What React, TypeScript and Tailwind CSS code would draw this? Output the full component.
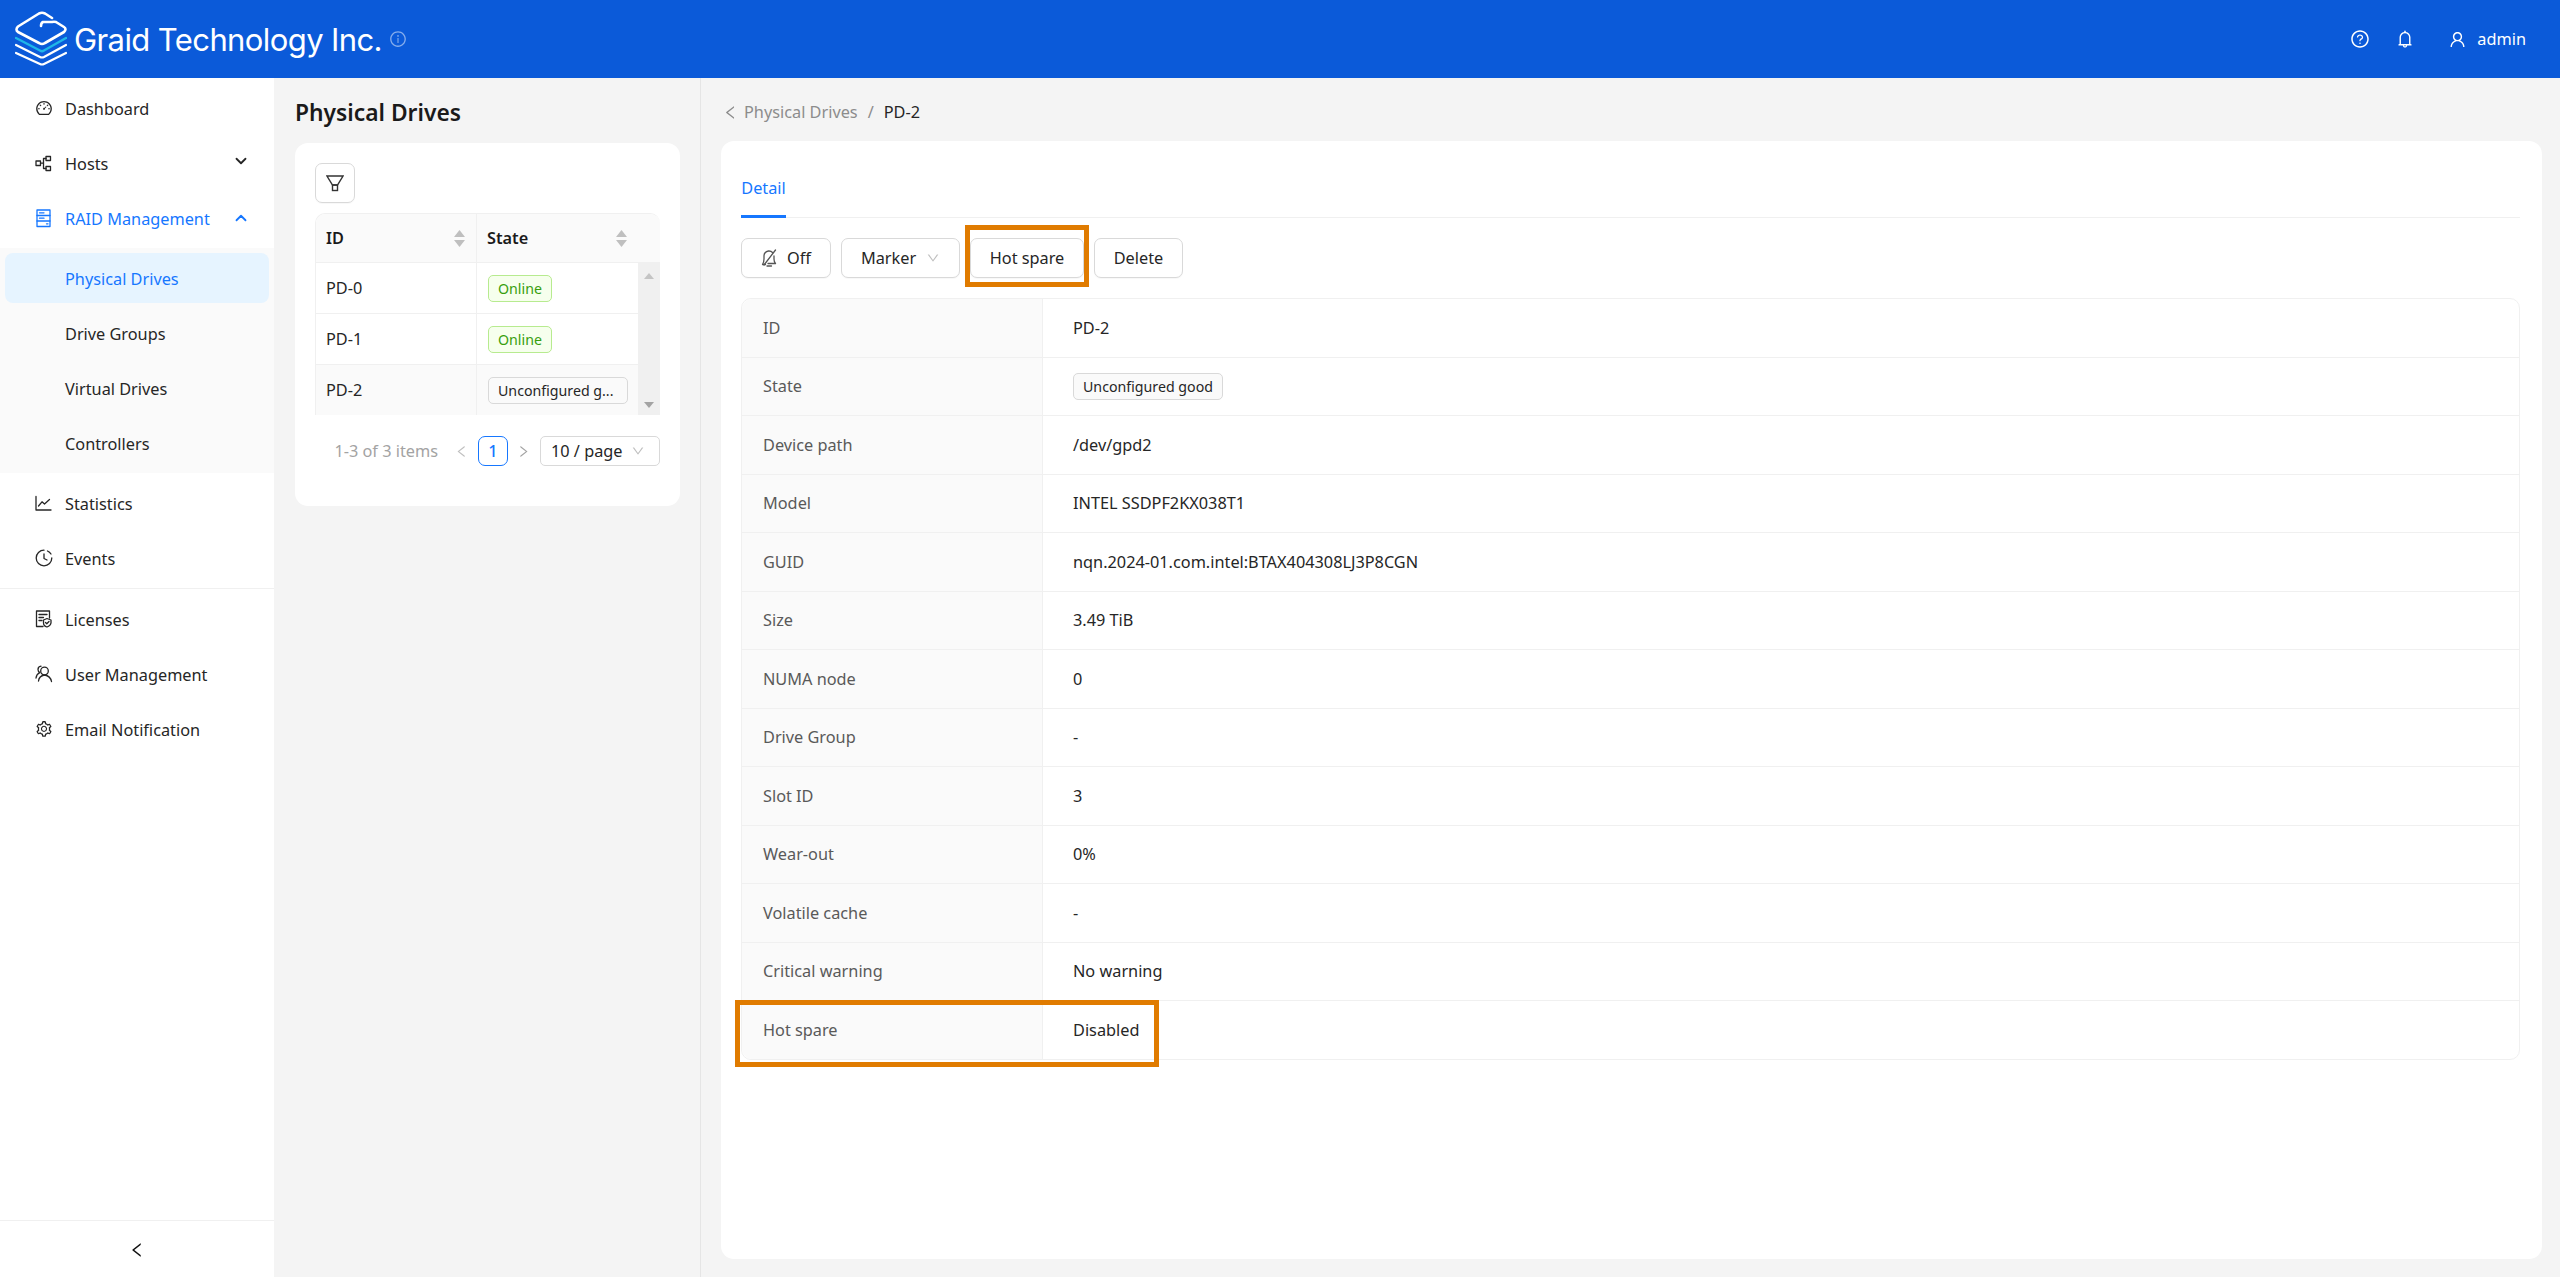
import React from 'react';
import {
  AiOutlineBell,
  AiOutlineDashboard,
  AiOutlineDown,
  AiOutlineInfoCircle,
  AiOutlineLeft,
  AiOutlineQuestionCircle,
  AiOutlineRight,
  AiOutlineSetting,
  AiOutlineUser,
} from 'react-icons/ai';
import { ChevronDown, ChevronUp } from 'lucide-react';

const Logo = () => (
  <svg width="52" height="56" viewBox="0 0 52 56" fill="none" stroke="white" strokeWidth="2.6" strokeLinejoin="round" strokeLinecap="round">
    <path d="M37 7 L30 2.5 Q27 1 24 2.5 L3 15.5 Q0 18.5 3 21 L24 32 Q27 34 30 32 L49 21 Q52 18 49 16 L41 11 Q39 10.5 37 11 L28 11 Q26 12 26 15" />
    <path d="M1 27 L25 39.5 Q27 41 29 39.5 L51 27" stroke="#1fb6e8" strokeWidth="2.4" />
    <path d="M1 34 L25 46 Q27 47 29 46 L51 34" strokeWidth="2.2" />
    <path d="M1 42 L25 53 Q27 54 29 53 L51 42" strokeWidth="2.2" />
  </svg>
);

const line = { fill: 'none', stroke: 'currentColor', strokeWidth: 1.3, strokeLinecap: 'round', strokeLinejoin: 'round' } as const;

const HostsIcon = () => (
  <svg width="17" height="17" viewBox="0 0 17 17" {...line}>
    <rect x="1" y="6" width="4.5" height="4.5" />
    <rect x="11" y="1.5" width="4.5" height="4" />
    <rect x="11" y="11.5" width="4.5" height="4" />
    <path d="M5.5 8.2 H8.5 M8.5 3.5 V13.5 M8.5 3.5 H11 M8.5 13.5 H11" />
  </svg>
);

const RaidIcon = () => (
  <svg width="17" height="19" viewBox="0 0 17 19" {...line}>
    <rect x="2" y="1" width="13" height="16.5" />
    <path d="M2 6.5 H15 M2 12 H15 M4.5 3.8 H9 M4.5 9.2 H9 M11.5 14.8 H13" />
  </svg>
);

const StatsIcon = () => (
  <svg width="17" height="17" viewBox="0 0 17 17" {...line}>
    <path d="M1 1.5 V15 H16" />
    <path d="M3.5 11 L7 6.8 L9.5 9 L14.5 4.5" />
  </svg>
);

const EventsIcon = () => (
  <svg width="18" height="18" viewBox="0 0 18 18" {...line}>
    <path d="M9 1.2 A7.8 7.8 0 1 0 16.8 9" />
    <path d="M12.5 2 A7.8 7.8 0 0 1 16 5" />
    <path d="M9 5 V9.5 L12 11" />
  </svg>
);

const LicenseIcon = () => (
  <svg width="17" height="18" viewBox="0 0 17 18" {...line}>
    <path d="M8 16.5 H1.5 V1 H14.5 V8" />
    <path d="M4 4.5 H12 M4 7.5 H8.5 M4 10.5 H7" />
    <path d="M12 8.5 L16 10 V13 Q15.5 16 12 17 Q8.5 16 8.5 13 V10 Z" />
    <path d="M10.5 12.5 L11.8 13.8 L14 11.5" />
  </svg>
);

const UsersIcon = () => (
  <svg width="18" height="18" viewBox="0 0 18 18" {...line}>
    <circle cx="9.5" cy="6" r="3.8" />
    <path d="M3.5 16 Q4 11 9.5 10 Q15.5 11 16.5 16.5" />
    <path d="M6 1.2 Q3 1.5 3 4.5 Q3 6.5 4.8 7.6 Q1.5 9 1 13" />
  </svg>
);

const FilterIcon = () => (
  <svg width="18" height="17" viewBox="0 0 18 17" fill="none" stroke="#333" strokeWidth="1.4">
    <path d="M1 1 H17 L11.5 10 H6.5 Z" />
    <rect x="6.5" y="10" width="5" height="5.5" />
  </svg>
);

const BellOffIcon = () => (
  <svg width="16" height="18" viewBox="0 0 16 18" {...line} stroke="#555">
    <path d="M4.5 15.5 H1.5 Q3 13 3 10 V7 Q3 3 7.5 2 Q10 1.8 11.5 3.5 M13 7 V10 Q13 13 14.5 14.5 H7" />
    <path d="M6 17 H10.5 M14.5 1 L3 16" />
  </svg>
);

const SortCarets = () => (
  <svg width="11" height="17" viewBox="0 0 11 17" fill="#bfbfbf">
    <path d="M5.5 0 L11 7 H0 Z" />
    <path d="M5.5 17 L11 10 H0 Z" />
  </svg>
);

const NavItem = ({ icon, label, active, trailing }: { icon?: React.ReactNode, label: string, active?: boolean, trailing?: React.ReactNode }) => (
  <div className={`flex h-[50px] items-center mx-[5px] mt-[5px] pl-[30px] pr-[19px] rounded-[8px] ${active ? 'text-[#1677ff]' : 'text-[#262626]'}`}>
    <span className="w-[30px] flex items-center shrink-0">{icon}</span>
    <span className="flex-1 pt-[2px]">{label}</span>
    {trailing}
  </div>
);

const SubItem = ({ label, active }: { label: string, active?: boolean }) => (
  <div className={`flex h-[50px] items-center mx-[5px] mt-[5px] first:mt-0 pl-[60px] pt-[2px] rounded-[8px] ${active ? 'bg-[#e6f4ff] text-[#1677ff]' : 'text-[#262626]'}`}>
    {label}
  </div>
);

const Sidebar = () => (
  <aside className="w-[274px] shrink-0 bg-white flex flex-col">
    <nav className="flex-1">
      <NavItem icon={<AiOutlineDashboard size={18} />} label="Dashboard" />
      <NavItem icon={<HostsIcon />} label="Hosts" trailing={<ChevronDown size={18} strokeWidth={2.4} className="-mt-[4px]" />} />
      <NavItem icon={<RaidIcon />} label="RAID Management" active trailing={<ChevronUp size={18} strokeWidth={2.4} />} />
      <div className="bg-[#fafafa] mt-[5px] py-[5px]">
        <SubItem label="Physical Drives" active />
        <SubItem label="Drive Groups" />
        <SubItem label="Virtual Drives" />
        <SubItem label="Controllers" />
      </div>
      <NavItem icon={<StatsIcon />} label="Statistics" />
      <NavItem icon={<EventsIcon />} label="Events" />
      <div className="h-px bg-[#f0f0f0] mt-[5px]" />
      <NavItem icon={<LicenseIcon />} label="Licenses" />
      <NavItem icon={<UsersIcon />} label="User Management" />
      <NavItem icon={<AiOutlineSetting size={18} />} label="Email Notification" />
    </nav>
    <div className="h-[57px] border-t border-[#f0f0f0] flex items-center justify-center text-[#111] pt-[2px]">
      <AiOutlineLeft size={18} />
    </div>
  </aside>
);

const Tag = ({ children, green }: { children: React.ReactNode, green?: boolean }) => (
  <span className={`inline-flex h-[27px] items-center px-[9px] rounded-[5px] border text-[14.2px] whitespace-nowrap ${green ? 'bg-[#f6ffed] border-[#b7eb8f] text-[#389e0d]' : 'bg-[#fafafa] border-[#d9d9d9] text-[#262626]'}`}>
    {children}
  </span>
);

const driveRows = [
  { id: 'PD-0', tag: <Tag green>Online</Tag> },
  { id: 'PD-1', tag: <Tag green>Online</Tag> },
  { id: 'PD-2', tag: <Tag><span className="w-[120px]">Unconfigured g...</span></Tag>, selected: true },
];

const DrivesPanel = () => (
  <section className="w-[427px] shrink-0 border-l border-l-[#f4f4f4] border-r border-[#e5e5e5] pl-[20px] pr-[20px]">
    <h2 className="h-[65px] pt-[6px] flex items-center text-[22.8px] font-semibold text-[#1a1a1a]">Physical Drives</h2>
    <div className="bg-white rounded-[13px] h-[363px] p-[20px]">
      <button className="w-[40px] h-[40px] rounded-[7px] border border-[#d9d9d9] shadow-[0_1px_1px_rgba(0,0,0,0.03)] flex items-center justify-center">
        <FilterIcon />
      </button>
      <div className="mt-[10px] w-[345px] h-[202px] rounded-t-[10px] overflow-hidden border-l border-t border-[#f0f0f0] flex flex-col">
        <div className="h-[49px] shrink-0 flex bg-[#fafafa] border-b border-[#f0f0f0] font-semibold text-[#1a1a1a]">
          <div className="w-[161px] border-r border-[#f0f0f0] pl-[10px] pr-[11px] flex items-center justify-between">ID<SortCarets /></div>
          <div className="flex-1 pl-[10px] pr-[33px] flex items-center justify-between">State<SortCarets /></div>
        </div>
        <div className="flex flex-1">
          <div className="w-[322px]">
            {driveRows.map((r) => (
              <div key={r.id} className={`h-[51px] flex border-b border-[#f0f0f0] ${r.selected ? 'bg-[#fafafa]' : ''}`}>
                <div className="w-[161px] border-r border-[#f0f0f0] pl-[10px] flex items-center text-[#262626]">{r.id}</div>
                <div className="flex-1 pl-[11px] pt-[1px] flex items-center">{r.tag}</div>
              </div>
            ))}
          </div>
          <div className="w-[22px] bg-[#f0f0f0] flex flex-col items-center justify-between pt-[10px] pb-[8px]">
            <svg width="10" height="6" viewBox="0 0 10 6" fill="#c4c4c4"><path d="M5 0 L10 6 H0 Z" /></svg>
            <svg width="10" height="6" viewBox="0 0 10 6" fill="#a3a3a3"><path d="M5 6 L10 0 H0 Z" /></svg>
          </div>
        </div>
      </div>
      <div className="mt-[21px] h-[30px] w-[345px] flex items-center justify-end">
        <span className="text-[#a3a3a3] mr-[16px]">1-3 of 3 items</span>
        <AiOutlineLeft size={15} className="text-[#bfbfbf] mr-[9px]" />
        <span className="w-[30px] h-[30px] rounded-[7px] border border-[#1677ff] text-[#1677ff] font-medium flex items-center justify-center">1</span>
        <AiOutlineRight size={15} className="text-[#a3a3a3] mx-[8px]" />
        <span className="ml-[1px] w-[120px] h-[30px] rounded-[5px] border border-[#d9d9d9] pl-[10px] pr-[14px] flex items-center justify-between text-[#262626]">
          10 / page<AiOutlineDown size={14} className="text-[#bfbfbf]" />
        </span>
      </div>
    </div>
  </section>
);

const ActionButton = ({ children, width }: { children: React.ReactNode, width: string }) => (
  <button className={`${width} h-[40px] rounded-[7px] border border-[#d9d9d9] bg-white shadow-[0_1px_1px_rgba(0,0,0,0.03)] flex items-center justify-center gap-[10px] text-[#262626]`}>
    {children}
  </button>
);

const details: [string, React.ReactNode][] = [
  ['ID', 'PD-2'],
  ['State', <Tag>Unconfigured good</Tag>],
  ['Device path', '/dev/gpd2'],
  ['Model', 'INTEL SSDPF2KX038T1'],
  ['GUID', 'nqn.2024-01.com.intel:BTAX404308LJ3P8CGN'],
  ['Size', '3.49 TiB'],
  ['NUMA node', '0'],
  ['Drive Group', '-'],
  ['Slot ID', '3'],
  ['Wear-out', '0%'],
  ['Volatile cache', '-'],
  ['Critical warning', 'No warning'],
  ['Hot spare', 'Disabled'],
];

const DetailPane = () => (
  <main className="flex-1 min-w-0 flex flex-col pl-[20px] pr-[18px] pb-[18px]">
    <div className="h-[63px] pt-[6px] shrink-0 flex items-center text-[#8c8c8c]">
      <AiOutlineLeft size={17} className="mr-[5px] ml-[1px]" />
      <span>Physical Drives</span>
      <span className="mx-[10px]">/</span>
      <span className="text-[#262626]">PD-2</span>
    </div>
    <div className="flex-1 bg-white rounded-[13px] pt-[21px] pl-[20px] pr-[22px]">
      <div className="h-[56px] border-b border-[#f0f0f0] flex">
        <div className="h-[56px] w-[45px] border-b-[3px] border-[#1677ff] text-[#1677ff] flex items-center justify-center">Detail</div>
      </div>
      <div className="mt-[20px] flex gap-[10px]">
        <ActionButton width="w-[90px]"><BellOffIcon />Off</ActionButton>
        <ActionButton width="w-[119px]">Marker<AiOutlineDown size={14} className="text-[#bfbfbf]" /></ActionButton>
        <div className="relative">
          <ActionButton width="w-[114px]">Hot spare</ActionButton>
          <div className="absolute -left-[5px] -right-[5px] -top-[13px] -bottom-[9px] border-[5px] border-[#e07b00] pointer-events-none" />
        </div>
        <ActionButton width="w-[89px]">Delete</ActionButton>
      </div>
      <div className="mt-[20px] h-[762px] rounded-[10px] border border-[#f0f0f0] flex flex-col">
        {details.map(([label, value], i) => (
          <div key={label} className={`relative flex-1 flex ${i > 0 ? 'border-t border-[#f0f0f0]' : ''}`}>
            <div className={`w-[301px] bg-[#fafafa] border-r border-[#f0f0f0] pl-[21px] flex items-center text-[#595959] ${i === 0 ? 'rounded-tl-[10px]' : ''} ${i === details.length - 1 ? 'rounded-bl-[10px]' : ''}`}>{label}</div>
            <div className="flex-1 pl-[30px] flex items-center text-[#262626]">{value}</div>
            {label === 'Hot spare' && (
              <div className="absolute -left-[7px] -top-[1px] -bottom-[8px] w-[424px] border-[5px] border-[#e07b00] pointer-events-none" />
            )}
          </div>
        ))}
      </div>
    </div>
  </main>
);

export default function App() {
  return (
    <div className="h-screen flex flex-col bg-[#f4f4f4] text-[16.3px] overflow-hidden font-['Noto_Sans','Liberation_Sans',sans-serif]">
      <header className="h-[78px] shrink-0 bg-[#0b5ad9] flex items-center pl-[15px] pr-[34px] text-white">
        <Logo />
        <span className="ml-[7px] text-[31px] leading-none tracking-[-0.6px] font-['Inter',sans-serif]">Graid Technology Inc.</span>
        <AiOutlineInfoCircle size={18} className="ml-[7px] text-white/50" />
        <div className="ml-auto flex items-center">
          <AiOutlineQuestionCircle size={20} />
          <AiOutlineBell size={20} className="ml-[25px]" />
          <AiOutlineUser size={19} className="ml-[33px]" />
          <span className="ml-[10px]">admin</span>
        </div>
      </header>
      <div className="flex-1 flex min-h-0">
        <Sidebar />
        <DrivesPanel />
        <DetailPane />
      </div>
    </div>
  );
}
